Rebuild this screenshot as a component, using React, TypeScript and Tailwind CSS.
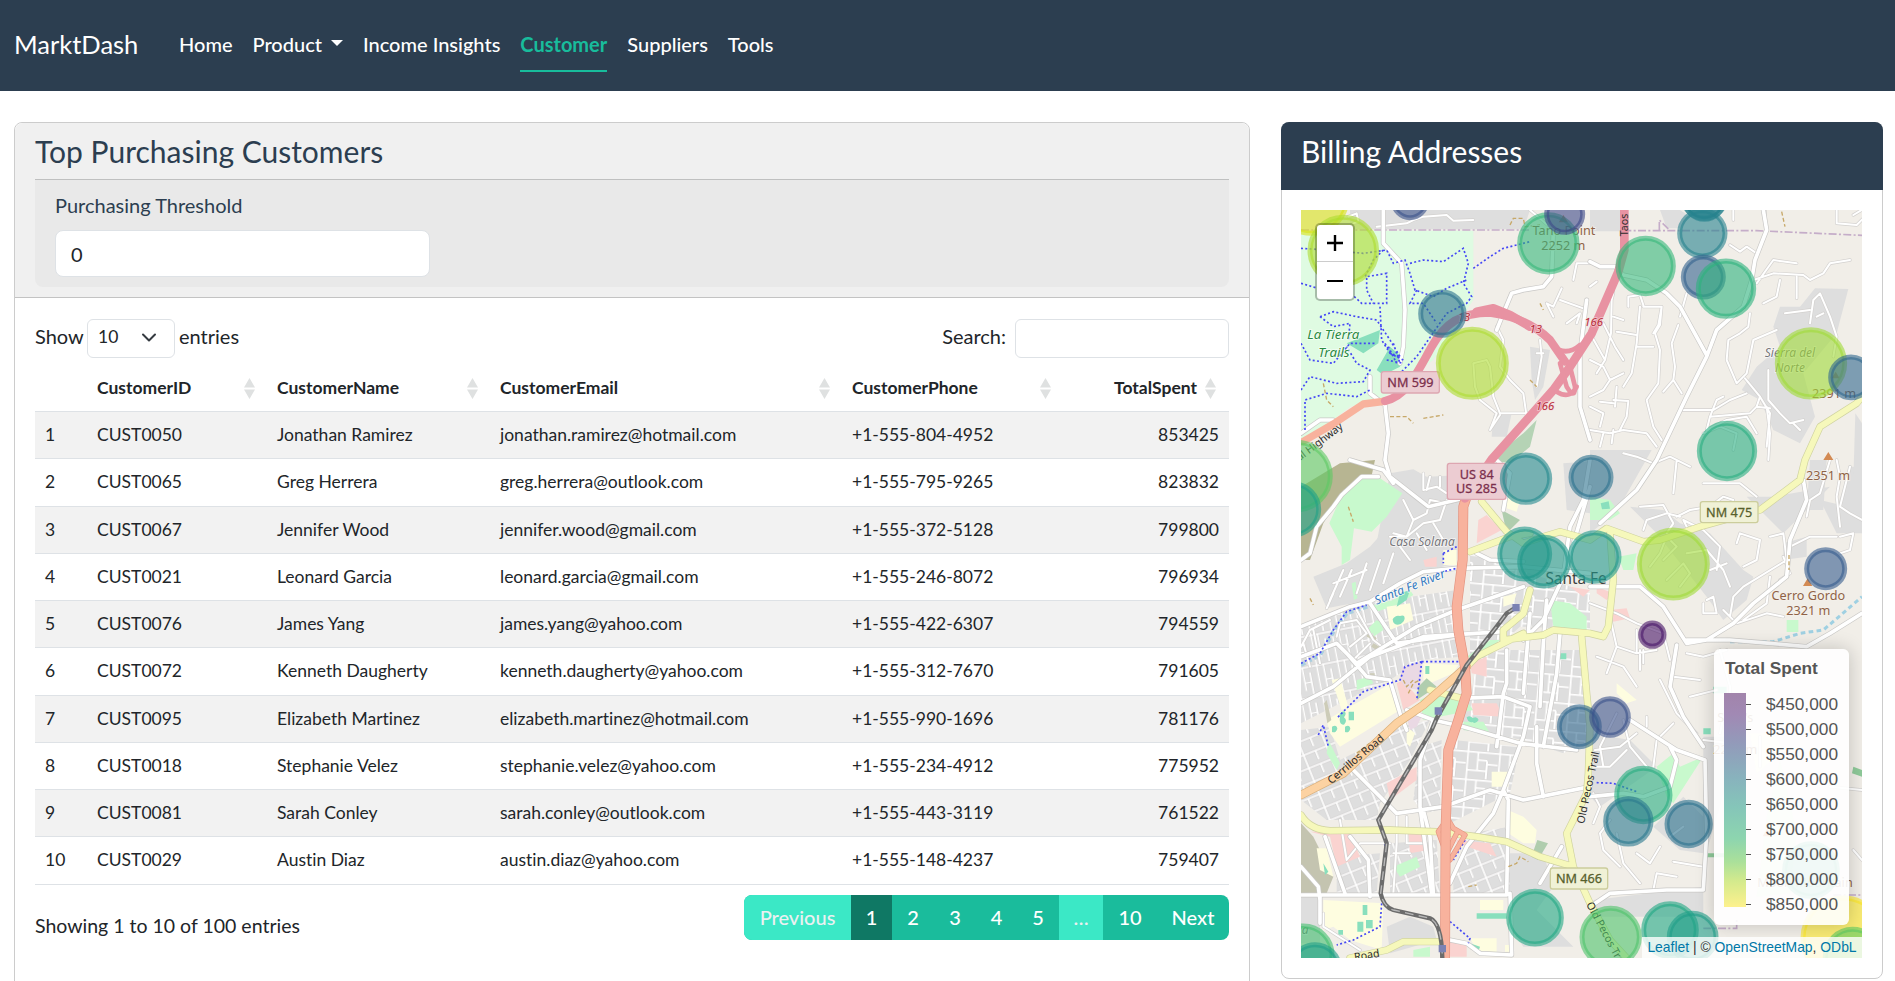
import React from "react";

const customers = [
  ["CUST0050", "Jonathan Ramirez", "jonathan.ramirez@hotmail.com", "+1-555-804-4952", "853425"],
  ["CUST0065", "Greg Herrera", "greg.herrera@outlook.com", "+1-555-795-9265", "823832"],
  ["CUST0067", "Jennifer Wood", "jennifer.wood@gmail.com", "+1-555-372-5128", "799800"],
  ["CUST0021", "Leonard Garcia", "leonard.garcia@gmail.com", "+1-555-246-8072", "796934"],
  ["CUST0076", "James Yang", "james.yang@yahoo.com", "+1-555-422-6307", "794559"],
  ["CUST0072", "Kenneth Daugherty", "kenneth.daugherty@yahoo.com", "+1-555-312-7670", "791605"],
  ["CUST0095", "Elizabeth Martinez", "elizabeth.martinez@hotmail.com", "+1-555-990-1696", "781176"],
  ["CUST0018", "Stephanie Velez", "stephanie.velez@yahoo.com", "+1-555-234-4912", "775952"],
  ["CUST0081", "Sarah Conley", "sarah.conley@outlook.com", "+1-555-443-3119", "761522"],
  ["CUST0029", "Austin Diaz", "austin.diaz@yahoo.com", "+1-555-148-4237", "759407"],
];

const COLS = "grid grid-cols-[52px_180px_223px_352px_221px_166px]";

function SortIcon({ className = "" }: { className?: string }) {
  return (
    <svg width="11" height="21" viewBox="0 0 11 21" className={className} fill="#dfe1e1">
      <path d="M5.5 0L11 9.5H0zM5.5 21L11 11.5H0z" />
    </svg>
  );
}

function Navbar() {
  const item = "h-[42px] border-b-2 border-transparent";
  return (
    <nav className="flex h-[91px] items-center bg-[#2c3e50] px-[14px] text-[20px] leading-7 text-white">
      <div className="mr-[41px] mt-[-3px] w-[124px] whitespace-nowrap text-[25.5px] leading-8">MarktDash</div>
      <div className="flex gap-5 pt-[11px] font-medium">
        <a className={item}>Home</a>
        <a className={item + " flex gap-[9px]"}>
          Product
          <svg width="12" height="6" viewBox="0 0 12 6" className="mt-[10px]" fill="#fff">
            <path d="M0 0h12L6 6z" />
          </svg>
        </a>
        <a className={item}>Income Insights</a>
        <a className="h-[42px] border-b-2 border-[#18bc9c] font-bold text-[#18bc9c]">Customer</a>
        <a className={item}>Suppliers</a>
        <a className={item}>Tools</a>
      </div>
    </nav>
  );
}

function Pagination() {
  const base = "flex h-[45px] items-center justify-center pb-px";
  return (
    <div className="flex overflow-hidden rounded-lg bg-[#1abc9c] text-xl font-medium text-white">
      <span className={base + " w-[107px] bg-[#3be8c6] text-[#ecf0f1]"}>Previous</span>
      <span className={base + " w-[41px] bg-[#0f7864]"}>1</span>
      <span className={base + " w-[42px]"}>2</span>
      <span className={base + " w-[42px]"}>3</span>
      <span className={base + " w-[41px]"}>4</span>
      <span className={base + " w-[42px]"}>5</span>
      <span className={base + " w-[44px] bg-[#3be8c6] text-[#ecf0f1]"}>…</span>
      <span className={base + " w-[54px]"}>10</span>
      <span className={base + " w-[72px]"}>Next</span>
    </div>
  );
}

function CustomersCard() {
  return (
    <section className="h-[900px] w-[1236px] rounded-t-lg border border-[#ccc] bg-white">
      <header className="h-[175px] rounded-t-lg border-b border-[#c3c3c3] bg-[#f0f0f0] px-5 pt-[10px] text-[#2c3e50]">
        <h3 className="text-[30px] leading-9">Top Purchasing Customers</h3>
        <div className="mt-[10px] h-[108px] rounded-b-lg border-t border-[#bfc0c0] bg-[#e9e9e9] px-5 pt-[10px]">
          <label className="block text-xl leading-[30px]">Purchasing Threshold</label>
          <div className="mt-[10px] flex h-[47px] w-[375px] items-center rounded-lg border border-[#dee2e6] bg-white px-[15px] text-xl text-[#212529]">0</div>
        </div>
      </header>
      <div className="px-5 pt-5">
        <div className="flex h-10 items-center text-xl">
          <span className="w-[52px] pb-1">Show</span>
          <span className="flex h-[39px] w-[88px] items-center justify-between rounded-md border border-[#dee2e6] pb-0.5 pl-[10px] pr-[17px] text-[17.5px]">
            10
            <svg width="16" height="16" viewBox="0 0 16 16" fill="none" stroke="#343a40" strokeWidth="2" strokeLinecap="round" strokeLinejoin="round">
              <path d="M2 5.5l6 6 6-6" />
            </svg>
          </span>
          <span className="ml-[4px] pb-1">entries</span>
          <span className="ml-auto mr-[9px] pb-1">Search:</span>
          <span className="h-[39px] w-[214px] rounded-md border border-[#dee2e6]" />
        </div>
        <div className={COLS + " h-[54px] items-center border-b border-[#dee2e6] pt-[7px] text-[17.5px] font-bold"}>
          <span />
          {["CustomerID", "CustomerName", "CustomerEmail", "CustomerPhone"].map((h) => (
            <span key={h} className="flex items-center justify-between pl-[10px] pr-[12px]">
              {h}
              <SortIcon />
            </span>
          ))}
          <span className="flex items-center justify-end gap-[8px] pr-[13px]">
            TotalSpent
            <SortIcon />
          </span>
        </div>
        {customers.map((c, i) => (
          <div key={c[0]} className={COLS + " h-[47.25px] items-center border-b border-[#dee2e6] text-[17.5px] *:px-[10px] " + (i % 2 ? "bg-white" : "bg-[#f2f2f2]")}>
            <span>{i + 1}</span>
            <span>{c[0]}</span>
            <span>{c[1]}</span>
            <span>{c[2]}</span>
            <span>{c[3]}</span>
            <span className="text-right">{c[4]}</span>
          </div>
        ))}
        <div className="flex items-start justify-between pt-[10px]">
          <span className="pt-[16px] text-[19.5px] leading-[30px]">Showing 1 to 10 of 100 entries</span>
          <Pagination />
        </div>
      </div>
    </section>
  );
}

const residential = [
  "M180 30H720L700 88H180z", "M900 30H1010V94H900z", "M1110 30h60l30 20-30 35h-40z",
  "M1575 265L1675 267 1640 400 1540 520 1575 650 1530 730 1450 690 1410 600 1355 570 1400 500 1470 440 1450 380 1470 320H1530z",
  "M720 440L780 450 760 560 735 600 725 540z", "M610 645L665 640 650 710 605 710z",
  "M900 750H1085L1000 900 950 960 900 1000z", "M820 790L960 780 990 860 900 940 830 930z",
  "M300 820L370 808 410 830 520 825 515 1040 380 1030 250 1080z",
  "M70 1130L170 1090 240 1040 330 940 510 930 500 1090 380 1120 240 1200 110 1225z",
  "M33 1280L230 1210 500 1170 515 1370 390 1380 300 1440 170 1500 33 1570z",
  "M540 1060L720 1120 900 1180V1290L690 1280 600 1360 540 1380z",
  "M560 1370L640 1350 890 1350 900 1620 820 1660 700 1620 520 1590 500 1550 545 1480z",
  "M33 1590L120 1580 150 1680 270 1620 330 1580 420 1560 360 1680 270 1810 260 1860 110 1860 33 1800z",
  "M490 1620L690 1640 660 1780 480 1870 475 1700z", "M390 1640L455 1620 450 1830 400 1840 370 1800z",
  "M140 1970L270 1960 260 2080H140z", "M300 1930L440 1920 450 2080 300 2090z",
  "M540 1900L660 1880V2080L490 2090V2020z", "M660 1960L760 1960 790 2060 740 2130 850 2240H700L660 2180z",
  "M1020 920L1120 930 1170 970 1260 1000 1360 1110 1390 1130 1370 1200 1300 1260 1250 1190 1100 1000z",
  "M1450 890L1620 860 1560 920 1480 1000 1370 890z", "M1560 780H1610L1600 930 1550 930z", "M1680 800h36v200l-90-30z",
  "M1480 1030L1550 1010V1070L1480 1080z", "M1590 900L1716 930V1000H1640z", "M1090 1880L1180 1790 1240 1850 1240 1960 1170 1950z",
  "M910 2100L1240 2060V2150L920 2150z", "M900 1600L1020 1620 1100 1700 930 1820 900 1790z", "M1240 1610H1340L1330 1680 1240 1990z",
  "M290 2180L360 2150 430 2180 440 2220 300 2260z", "M33 2090H90V2230H33z", "M1690 840h26v-170l-20-30z",
];

const greens = [
  "M215 835L260 828 337 880 290 950 245 995 192 985 180 1080 155 1095 155 1040 118 970 155 885z",
  "M115 1620L150 1690 140 1710 110 1660z", "M530 1370L600 1320 630 1320 560 1380z", "M390 1500L450 1470 520 1490 550 1530 400 1560z",
  "M900 890L960 900 990 940 960 960 900 960z", "M985 1070L1040 1060 1030 1110 1000 1110z", "M780 1200L840 1210 890 1250 890 1290 790 1280z",
  "M1100 1700L1150 1660 1170 1700 1240 1670 1150 1810 1130 1790z", "M520 1565L580 1565 600 1600 520 1590z",
  "M250 1270l20-10 10 30-30 20z", "M200 1440l40-10 10 20-50 20z", "M1490 1260h35v36h-35z", "M310 2000l70-30 10 30-60 30z", "M370 2250l50-10v30h-50z",
  "M250 1215l60-15 50-30 10 15-50 30-60 20z", "M185 1150l12-5 5 50-10 5z", "M230 1290l30-30 12 10-28 34z",
];

const teals = [
  "M170 430L270 390 265 430 220 460z", "M260 510L300 440 335 470 330 500 280 525z", "M308 1258q8-14 22-10 14-4 14 6t-12 18q-22 8-24-14z",
  "M330 1180l30-10-10 30-30 20z", "M150 1552q-6-14 12-18 10 4 0 18 12 10 0 22-16 0-12-22z", "M126 1580q14-8 16 6-4 14-16 10zM165 1580q14-8 16 6-4 14-16 10z",
  "M176 1535h16v26h-16z", "M1270 1460h40v20h-40z", "M218 2115h14v30h-14z", "M202 2165h18v30h-18z", "M228 2160h20v25h-20z", "M145 2190h14v14h-14z", "M560 2140h90v16h-90z", "M100 1990l15 25-10 10z",
  "M1240 1585h22v18h-22z", "M932 910l24-6 4 22-24 2z", "M540 2230l30 10-5 15-25-8z", "M805 1360h24v18h-24z", "M406 1398h12v24h-12z", "M530 1552q10-8 18 2 14-6 18 6-10 14-18 6-14 4-18-14z",
];

const yellows = [
  "M110 1560L300 1452 330 1530 150 1640 120 1600z", "M400 1390L505 1395 490 1420 420 1450 400 1440z", "M290 1220L360 1210 370 1260 300 1290z",
  "M100 2100L280 2110 275 2250 180 2220 130 2180 100 2190z", "M653 1830L700 1850 740 1890 735 1930 700 1930 655 1900z", "M80 1945H110L130 2030 90 2010z",
  "M570 2100H640V2130H570z", "M540 2215L620 2215V2260L560 2250z", "M605 1715H655V1760H605z", "M650 870L690 900 680 935 650 925z", "M460 1050H500V1095H460z",
  "M125 1440L150 1435 175 1520 155 1530z", "M350 1580L375 1600 360 1640 350 1630z", "M980 1450l60 50-30 10-30-30z", "M640 1190l40-10-10 30-30 10z",
  "M645 2235h24v20h-24z", "M1380 1600h70l30 50-80 70z",
];

const pinks = [
  "M565 960L590 945 635 990 560 1030z", "M60 1895H180L210 1970 140 2000 120 1910z", "M400 1080L440 1070 440 1100 405 1100z", "M320 1450L340 1440 390 1500 340 1530z",
  "M290 1750L380 1700 380 1740 300 1800z", "M355 1900L400 1900 415 1950 360 1960z", "M545 1510L620 1510 640 1550 550 1545z", "M500 1920L600 1930 620 1970 500 1930z",
  "M540 1390L590 1370 590 1430 545 1420z", "M920 1160l50 20-20 20-30-20z", "M960 1230l50-5 10 30-50 10z", "M480 2220l50 10v40h-50z", "M840 1160l60 10-20 20z",
];

const streets = [
  "M1425 30V60M175 50L200 40 205 65 190 70M260 80L350 70 370 60 400 50 470 45 490 62 550 60M720 30L790 90",
  "M630 645L600 690 620 640 570 600 555 560 550 490 590 480 600 500 605 545 610 590 630 640 720 640 760 600 740 630",
  "M620 380L640 420 630 500 660 540 700 580 710 650M750 420L755 470 740 560M740 460H760M900 190H860L850 240M815 265L790 320 770 310 790 350M810 300L880 325M830 370L870 340 860 370",
  "M965 250L970 280 965 300 963 400 945 480 900 400M970 350L1000 360M940 370L975 440 1000 480M1015 320V290L1050 285 1060 315 1060 320H1115L1105 375 1090 400M1050 320L1040 430 1035 460 1025 520 1000 560",
  "M1115 320L1110 375 1095 400 1110 450 1105 550 1070 600 1090 680 1115 720M1040 440H1090M980 395L1040 405M1190 280L1170 350M1165 375L1145 430 1155 500 1150 540 1120 575M1150 540L1175 580M1380 340L1375 380 1350 400 1315 420 1310 480 1340 550 1370 520 1390 420 1460 390M1365 535L1410 590M1370 580L1320 600 1270 630 1170 630",
  "M1260 650L1280 600 1300 590M1410 590L1400 620 1380 640 1260 650 1250 690 1310 660 1370 650 1400 700M1410 590L1440 640 1430 740M1400 620L1440 625",
  "M1400 250L1450 180 1520 190M1390 240L1450 220 1540 225 1560 240 1600 220 1620 190 1680 180M1470 240L1460 290 1420 310M1520 230V295M1560 370L1570 300 1590 280 1620 350 1640 410 1630 470M1485 340L1560 330M1580 350L1600 340M1435 510V600L1470 640 1500 670 1540 660M1510 670L1530 690M1640 30V70L1700 75 1735 40 1735 30M1690 45L1715 30",
  "M1320 135L1350 155 1370 140 1400 160M1330 30L1330 60M900 260L920 245M900 690L960 700 1000 690 1070 700 1100 740M940 700L930 740M970 690L965 730",
  "M1240 700L1290 680 1340 700 1330 750M1430 620L1440 700 1435 780",
  "M900 480L940 500 960 540 940 570 900 590M945 480L920 520M900 620L940 640 930 680M960 540L1000 520M970 600L1015 603 1010 650 990 690M930 605L970 610M980 560L975 620",
  "M1000 760L1040 770 1090 790 1140 770 1200 800M1160 780L1150 880M1050 920L1120 915 1150 970 1130 1000M1160 950L1200 930 1260 920 1300 890 1330 900M1240 850L1350 850 1400 890",
  "M1060 990L1070 960 1130 940 1170 950M1200 1000L1180 960 1240 990 1290 1040 1280 1110M1340 1030L1350 1000 1410 1020 1400 1080 1360 1100M1440 1010L1480 1000 1490 1080 1360 1160M1440 1130L1430 1210 1360 1260M1320 1250L1330 1190 1360 1160M1480 1250L1430 1240 1340 1270 1300 1230M1500 1040L1560 1010 1640 1010M1470 1140L1500 1120 1480 1070",
  "M1080 1100L1110 1060 1130 1010 1160 1040 1120 1080M1130 1140L1180 1090 1200 1120 1170 1160M1190 1060L1250 1050 1300 1110 1320 1160M1260 1110L1310 1090M1250 1200L1270 1190 1280 1240 1240 1240 1240 1210",
  "M1650 980L1640 890 1650 830 1640 780M1620 780L1590 880 1560 900 1550 950M1680 800L1650 920 1680 940 1716 960M1650 1010L1690 1000 1680 1050 1650 1060",
  "M900 1210L980 1240 1040 1270 1120 1300 1140 1380M960 1250L980 1340 950 1420M980 1340L1040 1360 1100 1350M1040 1290V1360M920 1370L1000 1400 1040 1460M1050 1350L1050 1410M1060 1350L1060 1390M1190 1360L1240 1370 1310 1350M1150 1430L1230 1440M1290 1350L1320 1460M1110 1440L1160 1540 1220 1600M1200 1490L1280 1470",
  "M915 1650L990 1640 1040 1600M900 1700H960L1010 1650M1000 1560L1020 1640 1070 1700M1150 1570L1100 1620 1090 1700M980 1540L930 1640 940 1700M1070 1550V1580",
  "M960 1860L930 1900 940 1950 990 2000M980 1900L1000 1990 1050 2050M1040 1960L1080 1990 1110 1940M1150 1985L1240 2000M1160 2030L1100 2020 1090 2070M1180 1880L1140 1910M910 1780L930 1820 910 1870",
  "M1240 1620L1320 1630M1410 1610V1700M1300 1550L1290 1600M1320 1460V1550M1690 1950L1716 1980M1620 1760L1716 1770",
  "M210 2250L100 2180V2140M150 1860L170 1980 210 1930 300 1930M320 1840V1930L310 2080M350 1850V1930H400M360 1960H310",
  "M400 820V870L440 860 470 880 500 850M420 830L410 870M450 830V860M340 900L370 960 350 1010 310 1000M370 960L410 940 420 900 470 910 510 900M300 1010L350 1010 400 970 450 960 470 900M330 1040L360 1080M380 1000L410 1050M430 970L460 1020",
  "M120 1200L160 1110M150 1190L185 1110M200 1180L230 1090M240 1170L270 1080M280 1150L310 1060M130 1150L230 1110M110 1225L130 1180M33 1340L60 1290 120 1260M60 1400L40 1330M90 1390L70 1290M140 1310L150 1270 200 1260 230 1300 180 1340M200 1230L250 1320 290 1350M190 1380L240 1330",
];

const whites = [
  "M280 30V130L335 190 345 330 340 440 330 490", "M240 530V580L285 615 295 700 285 780 300 830 415 920 520 895", "M33 700L90 660 130 660",
  "M790 90L785 230 760 260 700 270 665 280 640 340 620 390", "M890 300L870 460 870 620 900 720", "M900 185L930 200 975 200 1000 225 1070 240 1130 280 1170 320 1250 465",
  "M1420 30L1430 90 1395 180 1385 240 1360 320 1280 390 1250 470 1190 590 1100 780 1040 870 930 970", "M33 1080L60 1060 80 980 130 920 155 885 215 830 265 830M180 780L280 810 310 850",
  "M33 1280L180 1220 240 1205 330 1150 400 1115 500 1105 700 1100 900 1120", "M33 1370L140 1330 200 1390 380 1280 500 1230 700 1160", "M33 1510L130 1460 240 1370 400 1310 640 1295",
  "M240 1210L320 1330 500 1305", "M140 1330L170 1360 230 1430 300 1440 330 1540 350 1590", "M900 1160L1050 1160 1120 1220 1190 1330 1250 1320 1330 1270 1390 1210 1490 1130 1500 1020 1550 900 1540 840",
  "M1190 1320H1320L1440 1330 1550 1340 1620 1300 1716 1240", "M1160 1335L1140 1460 1180 1550 1240 1640", "M1020 1560L1160 1650 1245 1680 1250 1900 1240 2070 1130 2070 960 2080 900 2120", "M900 1790L1000 1780 1060 1790 1140 1760 1160 1680 1140 1640",
  "M430 1560L390 1680 390 1820 425 2080", "M180 1700L270 1790 320 1840 460 1820 600 1770 700 1800 900 1760", "M350 1530L430 1560 520 1580 690 1630 860 1650", "M33 2085H650L655 1800 640 1770 700 1610 720 1520 640 1490 510 1495",
  "M740 1580L740 1690 760 1790", "M480 2050L530 1940 610 1840 640 1770", "M33 2000L85 2060 90 2100M90 2090V2170", "M105 1910L165 2080M180 1910L235 1980 240 2090M400 1830L420 1910 430 2080",
  "M480 2220L530 2230 570 2260 665 2265 660 2080", "M815 1940L750 2050", "M900 780L880 900 840 980 820 1130 760 1260 700 1320", "M900 860L830 1100M620 780L660 820 640 930",
  "M650 1350V1450L640 1480 620 1640", "M770 1200L760 1330 750 1520M810 1300L800 1420 760 1640M720 1240L700 1480", "M560 1060L600 1080 700 1085",
];

const trails = [
  "M33 145L110 150 220 160 290 150 310 190 345 180 360 220 375 270 430 290 470 265 530 240", "M33 250L100 270 150 250 215 310 290 310 290 220 230 230 230 270 250 310",
  "M360 190L400 180 460 185 520 145 535 190 520 250 545 290 530 310 470 340 380 470 330 520", "M380 270L360 310 400 310 440 370", "M280 150L250 180 225 230M90 350L130 335 200 350 260 360 300 420 330 470",
  "M33 430L60 480 130 490 180 430 260 430M90 350L130 380 180 370 175 420", "M33 570L60 530 140 550 220 545 240 510 200 490 170 440", "M45 690L45 600 110 580 200 590 240 570", "M270 320L275 420 300 460 330 470",
  "M550 205L600 170 640 145 720 125", "M395 1385H510M395 1385L390 1430 380 1500M395 1385L345 1400 330 1440 220 1475 140 1555M85 1605L100 1575 115 1640", "M275 2110L270 2180 190 2220 140 2235M480 2165L540 2215 535 2230",
  "M285 1920V1980M920 1748L970 1750 1040 1775", "M285 430L310 470M295 440L320 490M300 460L340 480M310 430L330 490M290 480L340 490", "M525 1920L490 1980",
  "M33 1390L90 1360 130 1290 170 1235 230 1215M460 1060L500 1040M460 1060V1090M440 1120L500 1105",
];

const browns = [
  "M660 75L670 55 700 55 705 80 750 75", "M300 650H350L370 670M400 655L460 645", "M100 550L110 600 130 620", "M750 310L760 330M720 540L740 560M1475 35L1485 80", "M60 1195L70 1215M175 920L190 965", "M1497 1065V1110",
  "M340 1440L350 1460 370 1440M355 1480L370 1450 390 1440", "M655 2000L680 1990 690 1970 715 1985", "M535 2060L560 2055", "M200 1660L290 1590 340 1560",
];

const secondary = [
  "M575 905L650 995 700 1030 760 1010 810 995 900 1020 950 985 1060 1025 1110 1020 1230 980 1410 930 1530 840 1545 780 1590 680 1700 610 1716 590", "M540 1055L660 1010 720 1000", "M720 1170L700 1240 640 1290 640 1320 760 1305 790 1290 900 1300 940 1310 955 1280 970 1140 960 1000",
  "M530 1400L560 1370 640 1330 700 1300", "M420 1470L515 1495", "M875 1310L890 1480 900 1580 895 1720 890 1780 830 1900 850 2000 900 2110 960 2220 1010 2274",
  "M33 1845Q60 1890 120 1892L300 1890 440 1895 560 1910 650 1925 750 1970 850 2000", "M180 2274L290 2250 340 2225H455",
];

function Road({ list, casing, fill, w }: { list: string[]; casing: string; fill: string; w: number }) {
  const d = list.join("");
  return (
    <g fill="none" strokeLinejoin="round" strokeLinecap="round">
      <path d={d} stroke={casing} strokeWidth={w + 4} />
      <path d={d} stroke={fill} strokeWidth={w} />
    </g>
  );
}

// x, y, radius, colour
const markers: [number, number, number, string][] = [
  [65, -5, 105, "#d8e219"], [160, 152, 100, "#addc30"], [360, 3, 50, "#3b528b"], [775, 130, 86, "#35b779"], [824, 43, 54, "#3e4a89"],
  [457, 341, 65, "#2c728e"], [547, 490, 102, "#addc30"], [20, 828, 101, "#5ec962"], [10, 928, 76, "#1fa187"], [708, 836, 71, "#23888e"],
  [903, 832, 60, "#2c728e"], [704, 1062, 75, "#1f988b"], [762, 1085, 73, "#1f988b"], [914, 1071, 73, "#1f988b"], [1237, 100, 68, "#26828e"],
  [1243, 0, 58, "#26828e"], [1243, -10, 65, "#26828e"], [1240, 231, 60, "#33638d"], [1308, 266, 83, "#2db27d"], [1067, 198, 83, "#35b779"],
  [1563, 490, 101, "#a0da39"], [1683, 532, 61, "#31688e"], [1311, 753, 83, "#28ae80"], [1150, 1092, 102, "#a0da39"], [1607, 1106, 57, "#365c8d"],
  [1087, 1304, 35, "#481467"], [868, 1580, 60, "#31688e"], [960, 1551, 55, "#3b528b"], [1060, 1785, 80, "#28ae80"], [1015, 1864, 68, "#2a788e"],
  [1196, 1872, 65, "#2c728e"], [1140, 2190, 79, "#22a884"], [1208, 2210, 70, "#1f9e89"], [962, 2211, 86, "#4ec36b"], [735, 2153, 79, "#22a884"],
  [40, 2264, 86, "#44bf70"], [75, 2308, 74, "#1f9e89"], [1660, 2215, 121, "#fde725"], [1688, 2270, 82, "#5ec962"], [1563, 2010, 79, "#22a884"],
];

function Shield({ x, y, w, h, lines, tone }: { x: number; y: number; w: number; h: number; lines: string[]; tone: "pink" | "green" }) {
  const pink = tone === "pink";
  return (
    <g>
      <rect x={x} y={y} width={w} height={h} rx="7" fill={pink ? "#ecccd2" : "#f0f1d6"} stroke={pink ? "#dda6b1" : "#cccd9c"} strokeWidth="4" />
      {lines.map((t, i) => (
        <text key={t} x={x + w / 2} y={y + 46 + i * 44} textAnchor="middle" fontSize="38" fill={pink ? "#7b2f4d" : "#57602c"} strokeWidth=".8" stroke={pink ? "#7b2f4d" : "#57602c"}>{t}</text>
      ))}
    </g>
  );
}

const RAIL = "M678 1222L650 1240 620 1280 530 1395 440 1555 425 1590 265 1860 290 1930 272 2080Q280 2120 310 2130L420 2155Q455 2170 457 2274";

function MapCanvas() {
  return (
    <svg width="561" height="748" viewBox="33 30 1683 2244" className="block" fontFamily="'Noto Sans', sans-serif">
      <defs>
        <pattern id="blocks" width="74" height="42" patternUnits="userSpaceOnUse" patternTransform="rotate(-22)">
          <rect width="74" height="42" fill="#dedede" />
          <path d="M0 6H74M6 0V42M44 6V34" stroke="#cfcdcb" strokeWidth="7" />
          <path d="M0 6H74M6 0V42M44 6V34" stroke="#fff" strokeWidth="5" />
        </pattern>
        <pattern id="rows" width="64" height="92" patternUnits="userSpaceOnUse" patternTransform="rotate(-11)">
          <rect width="64" height="92" fill="#dedede" />
          <path d="M4 0V92M24 6V76M44 22V92M0 6H64M24 52H44" stroke="#cfcdcb" strokeWidth="7" />
          <path d="M4 0V92M24 6V76M44 22V92M0 6H64M24 52H44" stroke="#fff" strokeWidth="5" />
        </pattern>
        <pattern id="town" width="96" height="84" patternUnits="userSpaceOnUse" patternTransform="rotate(5)">
          <rect width="96" height="84" fill="#dedede" />
          <path d="M5 0V84M36 5V60M64 30V84M0 5H96M5 60H64M64 40H96M36 28H64" fill="none" stroke="#cfcdcb" strokeWidth="8" />
          <path d="M5 0V84M36 5V60M64 30V84M0 5H96M5 60H64M64 40H96M36 28H64" fill="none" stroke="#fff" strokeWidth="6" />
        </pattern>
      </defs>
      <rect x="33" y="30" width="1683" height="2244" fill="#f1eee8" />
      <path d="M33 92H550V300L430 480 270 600 180 620 33 735z" fill="#dffbe2" />
      <path d="M33 860L150 790 255 780 240 850 160 870 100 970 60 1080H33z" fill="#b7b592" />
      <path d="M33 1870L70 1910 130 2030 110 2080 33 2085z" fill="#c4c4b0" />
      <path d="M600 780L700 700 740 660 720 740 660 790z" fill="#b5d3b5" />
      {residential.map((d, i) => (
        <path key={i} d={d} fill={i === 10 ? "url(#rows)" : i === 11 || i === 12 || i === 14 ? "url(#town)" : i === 13 || (i >= 15 && i <= 18) ? "url(#blocks)" : "#dedede"} />
      ))}
      <path d={greens.join("")} fill="#c8f9cd" />
      <path d={yellows.join("")} fill="#fefde0" />
      <path d={pinks.join("")} fill="#fad3d0" />
      <path d="M335 1400L395 1385 390 1470 350 1465 330 1440zM350 1550l50-10-20 40-20 10z" fill="#ead9e4" />
      <path d="M385 1460L410 1435 440 1460 380 1500zM635 930L690 960 650 1000zM742 1920l32 10-30 50-20-10z" fill="#b0cdae" />
      <path d="M230 1300h10l20 14-4 8-26-12zM250 1330l22 12-6 12-22-14zM240 1420h14v18h-14zM110 1500l14 60-12 10-10-60z" fill="#cdccb8" />
      <path d={teals.join("")} fill="#89dfbd" />
      <path d="M1470 1680L1520 1900 1500 2080 1400 2090 1430 1850z" fill="#dff0d8" />
      <path d="M1690 1700l26 10v20l-30-10zM1250 1960h80v12h-80z" fill="#8fca9a" />
      <g fill="none" strokeWidth="5">
        <path d="M33 90H720M1000 92L1400 92 1716 106M1108 90V60L1140 92M1240 2185H1340V2160M1630 2085H1716" stroke="#c5adc9" strokeDasharray="24 7 6 7" />
        <path d="M33 1395L90 1365 130 1295 170 1240 240 1217" stroke="#a9cfe0" strokeWidth="12" strokeDasharray="14 8" />
        <path d="M1320 1325L1450 1325 1530 1300 1600 1290 1670 1230 1716 1190" stroke="#9fd0e2" strokeWidth="9" strokeDasharray="14 10" />
      </g>
      <Road list={streets} casing="#d3d1cf" fill="#fff" w={6} />
      <Road list={whites} casing="#c9c8c6" fill="#fff" w={11} />
      <g fill="none">
        <path d={browns.join("")} stroke="#c7a868" strokeWidth="4" strokeDasharray="12 7" />
        <path d={trails.join("")} stroke="#4447f5" strokeWidth="5" strokeDasharray="6 7" />
      </g>
      <Road list={secondary} casing="#cfd2a0" fill="#f6f8bb" w={18} />
      <Road list={["M33 1785L160 1720 320 1570 400 1515 530 1400"]} casing="#d9ae78" fill="#fcd2a2" w={22} />
      <Road
        list={["M33 728L130 672 220 612 290 603", "M530 890L520 920 518 1080 500 1220 505 1290 525 1400 530 1480 505 1560 475 1650 467 1880 465 2274", "M470 1860L445 1895 465 1950M475 1860L490 1885 525 1905 480 1980M475 1950L500 1900"]}
        casing="#e39481" fill="#f8b29d" w={12}
      />
      <path d="M530 890L520 920 518 1080 500 1220 505 1290 525 1400 530 1480 505 1560 475 1650 467 1880 465 2274" fill="none" stroke="#e39481" strokeWidth="30" strokeLinejoin="round" />
      <path d="M530 890L520 920 518 1080 500 1220 505 1290 525 1400 530 1480 505 1560 475 1650 467 1880 465 2274" fill="none" stroke="#f8b29d" strokeWidth="26" strokeLinejoin="round" />
      <path d="M33 728L130 672 220 612 290 603" fill="none" stroke="#f8b29d" strokeWidth="22" strokeLinejoin="round" />
      <g fill="none" stroke="#e892a2" strokeLinejoin="round" strokeLinecap="round">
        <path d="M285 603C350 590 380 520 425 440C465 370 510 338 600 338C690 350 745 385 780 420L825 485" strokeWidth="25" />
        <path d="M560 335L610 325 660 345 720 380" strokeWidth="26" />
        <path d="M525 895L605 778 790 570 840 500 905 400 985 215 1003 150V30" strokeWidth="26" />
        <path d="M790 440Q830 470 870 435M810 490L830 560Q855 600 855 560L840 500M860 560Q840 600 800 575" strokeWidth="14" />
      </g>
      <g fill="none">
        <path d={RAIL} stroke="#6c6c6c" strokeWidth="13" />
        <path d={RAIL} stroke="#b9b9b9" strokeWidth="4" strokeDasharray="26 16" />
      </g>
      <path d="M667 1212h22v22h-22zM434 1522h22v22h-22zM446 2235h22v22h-22z" fill="#7b82b3" />
      <path d="M1615 756l15 24h-30zM1553 1135l14 23h-28zM820 45l14 22h-28zM1637 515l12 20h-24zM1338 1505l14 22h-28zM1432 1885l14 24h-28z" fill="#d38a53" />
      <g fill="#8f6246" fontSize="38" textAnchor="middle" paintOrder="stroke" stroke="#f4f1eb" strokeWidth="5">
        <text x="822" y="106">Tano Point</text><text x="820" y="150">2252 m</text>
        <text x="1632" y="594">2391 m</text><text x="1614" y="840">2351 m</text>
        <text x="1555" y="1200">Cerro Gordo</text><text x="1555" y="1244">2321 m</text>
        <text x="1336" y="1566">Sally's</text><text x="1336" y="1614">Hill</text><text x="1336" y="1662">2263 m</text>
        <text x="1545" y="2060">Moon Mountain</text>
      </g>
      <g fontStyle="italic" textAnchor="middle" paintOrder="stroke" stroke="#fff" strokeOpacity=".7" strokeWidth="5" fontSize="40">
        <g fill="#2b8a42"><text x="130" y="417">La Tierra</text><text x="132" y="471">Trails</text></g>
        <g fill="#77767a" fontSize="36"><text x="396" y="1039">Casa Solana</text><text x="1500" y="471">Sierra del</text><text x="1500" y="515">Norte</text><text x="25" y="2203">Ana</text></g>
        <text transform="translate(364 1172) rotate(-22)" fill="#347ac0" fontSize="36">Santa Fe River</text>
        <g fill="#b92e3c" fontSize="34" stroke="#f4d9dc"><text x="522" y="362">13</text><text x="737" y="400">13</text><text x="911" y="378">166</text><text x="765" y="630">166</text></g>
      </g>
      <g fill="#2c2c2c" fontSize="32" textAnchor="middle">
        <text transform="translate(80 745) rotate(-37)">Real Highway</text>
        <text transform="translate(204 1686) rotate(-40)">Cerrillos Road</text>
        <text transform="translate(905 1765) rotate(-78)">Old Pecos Trail</text>
        <text transform="translate(940 2210) rotate(62)">Old Pecos Trail</text>
        <text transform="translate(1013 38) rotate(-90)">Taos Hwy</text>
        <text transform="translate(232 2276) rotate(-9)">Road</text>
      </g>
      <text x="858" y="1153" fontSize="46" fill="#3e3e3e" textAnchor="middle">Santa Fe</text>
      <Shield x={274} y={515} w={174} h={64} lines={["NM 599"]} tone="pink" />
      <Shield x={472} y={790} w={176} h={108} lines={["US 84", "US 285"]} tone="pink" />
      <Shield x={1231} y={905} w={173} h={63} lines={["NM 475"]} tone="green" />
      <Shield x={781} y={2004} w={172} h={63} lines={["NM 466"]} tone="green" />
      {markers.map(([x, y, r, c], i) => (
        <circle key={i} cx={x} cy={y} r={r} fill={c} fillOpacity=".6" stroke={c} strokeOpacity=".6" strokeWidth="15" />
      ))}
    </svg>
  );
}

function Legend() {
  const ticks = ["450", "500", "550", "600", "650", "700", "750", "800", "850"];
  return (
    <div className="absolute bottom-[33px] right-[13px] h-[276px] w-[135px] rounded-md bg-white/90 px-[11px] pt-2 font-['Liberation_Sans',sans-serif] text-[#555] shadow-[0_0_19px_rgba(0,0,0,0.2)]">
      <div className="text-[17.3px] font-bold leading-[22px]">Total Spent</div>
      <div className="mt-[14px] flex">
        <div className="-ml-px h-[214px] w-[23px] bg-[linear-gradient(#a284ab_0%,#a189b4_10%,#929bba_24%,#88b3bd_40%,#85c5b9_53%,#8dd5af_68%,#abe09a_79%,#d4ea8d_88%,#fdf18d_100%)]" />
        <div className="-mt-[1.5px] flex flex-col">
          {ticks.map((t) => (
            <div key={t} className="flex h-[25px] items-center text-[17.3px] leading-[25px]">
              <span className="mr-[15px] h-px w-[5px] bg-[#555]" />
              <span>${t},000</span>
            </div>
          ))}
        </div>
      </div>
    </div>
  );
}

function MapCard() {
  return (
    <section className="h-[857px] w-[602px] rounded-lg border border-[#ccc] bg-white">
      <header className="-mx-px -mt-px h-[68px] rounded-t-lg bg-[#2c3e50] px-[20px] pt-[11px] text-[30px] leading-9 text-white">Billing Addresses</header>
      <div className="relative mx-[19px] mt-5 h-[748px] w-[561px] overflow-hidden">
        <MapCanvas />
        <div className="absolute left-[14px] top-[13px] w-10 overflow-hidden rounded-[5px] border-2 border-black/25 bg-white bg-clip-padding">
          <div className="flex h-[37px] items-center justify-center border-b border-[#ccc]">
            <svg width="16" height="16" viewBox="0 0 16 16"><path d="M0 8H16M8 0V16" stroke="#000" strokeWidth="2.4" /></svg>
          </div>
          <div className="flex h-[37px] items-center justify-center">
            <svg width="16" height="16" viewBox="0 0 16 16"><path d="M0 8H16" stroke="#000" strokeWidth="2.2" /></svg>
          </div>
        </div>
        <Legend />
        <div className="absolute bottom-0 right-0 flex h-[21px] w-[220px] items-center justify-center whitespace-pre bg-white/80 font-['Liberation_Sans',sans-serif] text-[13.9px] text-[#333]">
          <span className="text-[#0078a8]">Leaflet</span> | © <span className="text-[#0078a8]">OpenStreetMap</span>, <span className="text-[#0078a8]">ODbL</span>
        </div>
      </div>
    </section>
  );
}

export default function App() {
  return (
    <div className="h-[981px] w-[1895px] overflow-hidden bg-white font-[Lato,sans-serif] text-[#212529] [font-variant-ligatures:none]">
      <Navbar />
      <main className="flex items-start gap-[31px] pl-[14px] pt-[31px]">
        <CustomersCard />
        <MapCard />
      </main>
    </div>
  );
}
